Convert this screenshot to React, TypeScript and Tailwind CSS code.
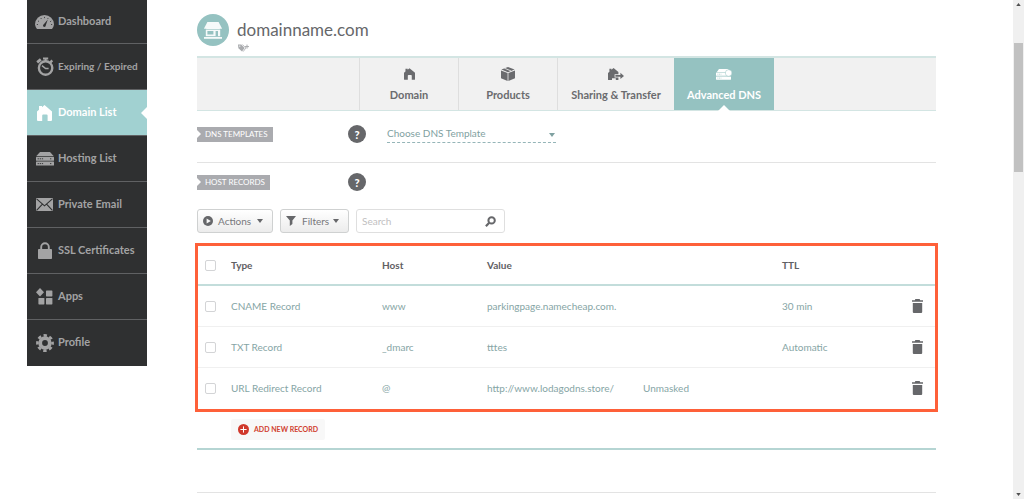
import type { ReactNode } from "react";

type IconProps = { className?: string };

function GaugeIcon({ className }: IconProps) {
    return (
        <svg viewBox="0 0 19 14" className={className}>
            <path d="M2 14A9.3 9.3 0 0 1 0 9.4a9.5 9.4 0 0 1 19 0A9.3 9.3 0 0 1 17 14z" fill="currentColor" />
            <g stroke="#2f3031" strokeWidth=".8" fill="none">
                <path d="M1.8 9.5h1.2M3 5.8l1 .8M5.8 3l.6 1M9.5 1.9v1.2M13.2 3l-.5.9M17.2 9.5H16M16.2 6l-1.1.8" />
            </g>
            <path d="M12.8 4.6l-2 5.6a1.4 1.4 0 1 1-2-1z" fill="#2f3031" />
        </svg>
    );
}

function StopwatchIcon({ className }: IconProps) {
    return (
        <svg viewBox="0 0 18 19" className={className}>
            <g stroke="currentColor" fill="none">
                <circle cx="9.6" cy="11" r="6.7" strokeWidth="2.4" />
                <path d="M9.6 4V1.5M7 1.4h5.2" strokeWidth="2" />
                <path d="M1.2 5.4l3.6-3M14.4 3.6l1.8 1.6" strokeWidth="2.8" />
                <path d="M6 8.6l3.6 3h3" strokeWidth="1.5" />
            </g>
        </svg>
    );
}

function HouseIcon({ className }: IconProps) {
    return (
        <svg viewBox="0 0 15 16" className={className} fill="currentColor">
            <path d="M2 1h3v1.2L7.5 0 15 6.4V15a1 1 0 0 1-1 1h-3.4v-5.6a1 1 0 0 0-1-1H6.2a1 1 0 0 0-1 1V16H1a1 1 0 0 1-1-1V6.4l2-1.7z" />
        </svg>
    );
}

function ServerIcon({ className }: IconProps) {
    return (
        <svg viewBox="0 0 18 14" className={className}>
            <g fill="currentColor">
                <path d="M4 0h10l3.6 4H.4z" />
                <rect y="4.8" width="18" height="4" rx=".6" />
                <rect y="9.6" width="18" height="4" rx=".6" />
            </g>
            <path d="M1.6 6.8h5.6M14 6.8h2M1.6 11.6h5.6M14 11.6h2" stroke="#2f3031" strokeWidth=".9" strokeDasharray="1.3 .8" />
        </svg>
    );
}

function MailIcon({ className }: IconProps) {
    return (
        <svg viewBox="0 0 17 13" className={className}>
            <rect width="17" height="13" rx=".8" fill="currentColor" />
            <path d="M.6.8l7.9 7 7.9-7M.6 12.4l5.6-6M16.4 12.4l-5.6-6" stroke="#2f3031" strokeWidth="1.1" fill="none" />
        </svg>
    );
}

function LockIcon({ className }: IconProps) {
    return (
        <svg viewBox="0 0 14 17" className={className}>
            <path d="M3.2 8V5a3.8 3.8 0 0 1 7.6 0v3" stroke="currentColor" strokeWidth="1.9" fill="none" />
            <rect y="7" width="14" height="10" rx=".8" fill="currentColor" />
        </svg>
    );
}

function AppsIcon({ className }: IconProps) {
    return (
        <svg viewBox="0 0 17 17" className={className} fill="currentColor">
            <path d="M4 0l4 4.2-4 4.2L0 4.2z" />
            <rect x="10" y="2.4" width="6.4" height="6" rx=".6" />
            <rect x="2.4" y="10" width="6" height="6.4" rx=".6" />
            <rect x="10" y="10" width="6.4" height="6.4" rx=".6" />
        </svg>
    );
}

function GearIcon({ className }: IconProps) {
    return (
        <svg viewBox="0 0 18 18" className={className}>
            <circle cx="9" cy="9" r="4.8" stroke="currentColor" strokeWidth="3.8" fill="none" />
            <circle cx="9" cy="9" r="7.6" stroke="currentColor" strokeWidth="2.6" strokeDasharray="3.4 2.57" strokeDashoffset="1.7" fill="none" />
        </svg>
    );
}

function ShopIcon({ className }: IconProps) {
    return (
        <svg viewBox="0 0 18 17" className={className}>
            <g fill="#f6fafa">
                <path d="M3.4 0h11.2L18 6.4c0 .8-18 .8-18 0z" />
                <path d="M1.8 7.6h14.4v6.6H1.8z" />
                <rect y="15" width="18" height="1.8" />
            </g>
            <path d="M3.4 9h6v3.4h-6zM11.6 9H14v5.2h-2.4z" fill="#95c2c1" />
        </svg>
    );
}

function TagPlusIcon({ className }: IconProps) {
    return (
        <svg viewBox="0 0 11 8" className={className}>
            <path d="M0 .6L3.2.4 6.6 4 4 7.6.4 4.2z" fill="#a9abae" />
            <path d="M4.4.5L7.8 4 5.2 7.6" stroke="#a9abae" strokeWidth=".8" fill="none" />
            <circle cx="1.8" cy="2.1" r=".7" fill="#fff" />
            <path d="M7 2.6h4M9 .6v4" stroke="#a9abae" strokeWidth="1" />
        </svg>
    );
}

function BoxIcon({ className }: IconProps) {
    return (
        <svg viewBox="0 0 14 14" className={className} fill="currentColor">
            <path d="M7 0l6.6 2.6L7 5.2.4 2.6z" />
            <path d="M0 3.4l6.6 2.7V14L0 11.2zM14 3.4L7.4 6.1V14l6.6-2.8z" />
            <path d="M3.4 1.2l6.8 2.8" stroke="#f1f1f1" strokeWidth=".8" />
        </svg>
    );
}

function TransferIcon({ className }: IconProps) {
    return (
        <svg viewBox="0 0 16 12" className={className} fill="currentColor">
            <path d="M1.4.8h2v1L5.6 0 10.4 4v2.2H6.6v3.2h3.8V12H7.8v-1.8H4V12H.6a.6.6 0 0 1-.6-.6V5l1.4-1.2z" />
            <path d="M7.4 7h5V4.8L16 7.9 12.4 11V8.7h-5z" />
        </svg>
    );
}

function DnsIcon({ className }: IconProps) {
    return (
        <svg viewBox="0 0 16 11" className={className}>
            <g fill="currentColor">
                <path d="M3 0h9l2 3H.8z" />
                <rect y="3.6" width="14" height="3.2" rx=".4" />
                <rect y="7.5" width="15" height="3.2" rx=".4" />
            </g>
            <path d="M1.4 5.2h4M1.4 9.1h4" stroke="#95c2c1" strokeWidth=".6" strokeDasharray="1 .6" />
            <circle cx="12.6" cy="4" r="3.3" fill="currentColor" stroke="#95c2c1" strokeWidth=".5" />
        </svg>
    );
}

function TrashIcon({ className }: IconProps) {
    return (
        <svg viewBox="0 0 11 14" className={className} fill="currentColor">
            <path d="M3.4 0h4.2l.6 1.2H11v1.6H0V1.2h2.8z" />
            <path d="M.8 4h9.4v9a1 1 0 0 1-1 1H1.8a1 1 0 0 1-1-1z" />
        </svg>
    );
}

function Caret({ className }: IconProps) {
    return (
        <svg viewBox="0 0 6 4" className={className} fill="currentColor">
            <path d="M0 0h6L3 4z" />
        </svg>
    );
}

const navItems = [
    { label: "Dashboard", icon: <GaugeIcon className="h-[14px] w-[19px]" /> },
    { label: "Expiring / Expired", icon: <StopwatchIcon className="h-[19px] w-[18px]" />, small: true },
    { label: "Domain List", icon: <HouseIcon className="h-[16px] w-[15px]" />, active: true },
    { label: "Hosting List", icon: <ServerIcon className="h-[14px] w-[18px]" /> },
    { label: "Private Email", icon: <MailIcon className="h-[13px] w-[17px]" /> },
    { label: "SSL Certificates", icon: <LockIcon className="h-[17px] w-[14px]" /> },
    { label: "Apps", icon: <AppsIcon className="size-[17px]" /> },
    { label: "Profile", icon: <GearIcon className="size-[18px]" /> },
];

const tabs = [
    { label: "Domain", icon: <HouseIcon className="h-[12px] w-[11px]" />, width: "w-[99px]" },
    { label: "Products", icon: <BoxIcon className="size-[14px]" />, width: "w-[99px]" },
    { label: "Sharing & Transfer", icon: <TransferIcon className="h-[12px] w-[16px]" />, width: "w-[117px]" },
    { label: "Advanced DNS", icon: <DnsIcon className="h-[11px] w-[16px]" />, width: "w-[100px]", active: true },
];

const records = [
    { type: "CNAME Record", host: "www", value: "parkingpage.namecheap.com.", extra: "", ttl: "30 min" },
    { type: "TXT Record", host: "_dmarc", value: "tttes", extra: "", ttl: "Automatic" },
    { type: "URL Redirect Record", host: "@", value: "http://www.lodagodns.store/", extra: "Unmasked", ttl: "" },
];

function Sidebar() {
    return (
        <nav className="w-[120px] shrink-0 self-start bg-[#2f3031]">
            {navItems.map((item, i) => (
                <a
                    key={item.label}
                    href="#"
                    className={[
                        "relative flex items-center border-b",
                        i === 0 ? "h-[44px]" : "h-[46px]",
                        i === navItems.length - 1 ? "border-[#2f3031]" : "border-[#606163]",
                        item.active ? "bg-[#a1d1d1] text-white" : "text-[#a3a3a4]",
                    ].join(" ")}
                >
                    <span className="flex w-[35px] justify-center">{item.icon}</span>
                    <span
                        className={[
                            "-ml-[4px] font-bold whitespace-nowrap",
                            item.small ? "text-[10px]" : "text-[11px]",
                        ].join(" ")}
                    >
                        {item.label}
                    </span>
                    {item.active && (
                        <svg viewBox="0 0 6 12" className="absolute right-0 h-3 w-1.5">
                            <path d="M6 0v12L0 6z" fill="#fff" />
                        </svg>
                    )}
                </a>
            ))}
        </nav>
    );
}

function TabBar() {
    return (
        <div className="mt-[4px] flex h-[55px] border-t-2 border-b border-[#d3e5e3] bg-[#f1f1f1]">
            <div className="flex-1" />
            {tabs.map((tab) => (
                <a
                    key={tab.label}
                    href="#"
                    className={[
                        "relative flex shrink-0 flex-col items-center text-[11px] font-bold",
                        tab.width,
                        tab.active ? "bg-[#95c2c1] text-white" : "border-l border-[#dedede] text-[#6a6b6e]",
                    ].join(" ")}
                >
                    <span className="mt-[8px] flex h-[16px] items-center">{tab.icon}</span>
                    <span className="mt-[5px] leading-4 whitespace-nowrap">{tab.label}</span>
                    {tab.active && (
                        <svg viewBox="0 0 12 6" className="absolute -bottom-px h-1.5 w-3">
                            <path d="M0 6h12L6 0z" fill="#fff" />
                        </svg>
                    )}
                </a>
            ))}
            <div className="flex-1" />
        </div>
    );
}

function SectionRow({ label, children }: { label: string; children?: ReactNode }) {
    return (
        <div className="flex h-[20px] items-center">
            <div className="flex w-[151px]">
                <span className="relative flex h-[15px] items-center bg-[#aaabaf] pr-[5px] pl-[8px] text-[8px] text-white uppercase">
                    <svg viewBox="0 0 4 8" className="absolute left-0 h-2 w-1">
                        <path d="M0 0v8l4-4z" fill="#fff" />
                    </svg>
                    {label}
                </span>
            </div>
            <button
                type="button"
                aria-label={`About ${label}`}
                className="mr-[21px] flex size-[18px] items-center justify-center rounded-full bg-[#66676a] text-[11px] leading-none font-black text-white"
            >
                ?
            </button>
            {children}
        </div>
    );
}

function Toolbar() {
    const button =
        "flex h-[24px] items-center rounded-[3px] border border-[#cfd1d1] bg-linear-to-b from-white to-[#ececec] pr-[9px] pl-[5px] text-[10px] text-[#77787b]";

    return (
        <div className="mt-[17px] flex">
            <button type="button" className={`${button} w-[76px]`}>
                <svg viewBox="0 0 10 10" className="mr-[5px] size-[10px]">
                    <circle cx="5" cy="5" r="5" fill="#66676a" />
                    <path d="M3.6 2.4v5.2L7.8 5z" fill="#f7f7f7" />
                </svg>
                Actions
                <Caret className="ml-auto h-1 w-1.5 text-[#66676a]" />
            </button>
            <button type="button" className={`${button} ml-[7px] w-[69px]`}>
                <svg viewBox="0 0 10 10" className="mr-[6px] size-[10px]">
                    <path d="M0 0h10L6.4 4.6V8L3.8 10V4.6z" fill="#66676a" />
                </svg>
                Filters
                <Caret className="ml-auto h-1 w-1.5 text-[#66676a]" />
            </button>
            <div className="ml-[7px] flex h-[24px] w-[149px] items-center rounded-[3px] border border-[#dfdfdf] px-[5px]">
                <input
                    type="text"
                    placeholder="Search"
                    aria-label="Search"
                    className="w-full min-w-0 text-[10px] outline-none placeholder:text-[#bfc0c1]"
                />
                <button type="button" aria-label="Run search" className="mr-[3px] shrink-0">
                    <svg viewBox="0 0 11 11" className="size-[11px]">
                        <circle cx="6.6" cy="4.4" r="3.2" stroke="#66676a" strokeWidth="2" fill="none" />
                        <path d="M4.2 6.8L.9 10.2" stroke="#66676a" strokeWidth="2.2" />
                    </svg>
                </button>
            </div>
        </div>
    );
}

function Checkbox({ label }: { label: string }) {
    return (
        <input
            type="checkbox"
            aria-label={label}
            className="block size-[11px] appearance-none rounded-[2px] border border-[#d3d4d6] bg-white checked:bg-[#95c2c1]"
        />
    );
}

function RecordsTable() {
    return (
        <div className="-mx-[2px] mt-[10px] border-[3px] border-[#fe6039]">
            <table className="w-full table-fixed border-separate border-spacing-0 text-left text-[10px]">
                <colgroup>
                    <col className="w-[33px]" />
                    <col className="w-[151px]" />
                    <col className="w-[105px]" />
                    <col className="w-[156px]" />
                    <col className="w-[139px]" />
                    <col />
                    <col className="w-[36px]" />
                </colgroup>
                <thead className="text-[#5f6063] [&_th]:h-[40px] [&_th]:border-b-2 [&_th]:border-[#c3dddb]">
                    <tr>
                        <th className="pl-[7px]">
                            <Checkbox label="Select all records" />
                        </th>
                        <th>Type</th>
                        <th>Host</th>
                        <th>Value</th>
                        <th />
                        <th>TTL</th>
                        <th />
                    </tr>
                </thead>
                <tbody className="text-[#86a5a5] [&_td]:h-[41px] [&_td]:border-b [&_td]:border-[#f0f0f0] [&>tr:last-child>td]:border-transparent">
                    {records.map((record) => (
                        <tr key={record.type}>
                            <td className="pl-[7px]">
                                <Checkbox label={`Select ${record.type}`} />
                            </td>
                            <td>{record.type}</td>
                            <td>{record.host}</td>
                            <td className="whitespace-nowrap">{record.value}</td>
                            <td>{record.extra}</td>
                            <td>{record.ttl}</td>
                            <td className="pl-[13px]">
                                <button type="button" aria-label={`Delete ${record.type}`} className="block text-[#66676a]">
                                    <TrashIcon className="h-[14px] w-[11px]" />
                                </button>
                            </td>
                        </tr>
                    ))}
                </tbody>
            </table>
        </div>
    );
}

function Scrollbar() {
    return (
        <div className="flex w-[11px] shrink-0 flex-col items-center bg-[#f0f0f0] text-[#505050]">
            <Caret className="mt-[3px] h-[3px] w-[5px] rotate-180" />
            <div className="mt-[37px] h-[129px] w-[9px] bg-[#c1c1c1]" />
            <Caret className="mt-auto mb-[3px] h-[3px] w-[5px]" />
        </div>
    );
}

export default function App() {
    return (
        <div className="flex min-h-screen bg-white pl-[27px] font-['Lato',sans-serif]">
            <Sidebar />
            <main className="mr-[77px] ml-[50px] min-w-0 flex-1">
                <header className="flex pt-[14px]">
                    <span className="flex size-[32px] items-center justify-center rounded-full bg-[#95c2c1]">
                        <ShopIcon className="h-[17px] w-[18px]" />
                    </span>
                    <div className="ml-[8px]">
                        <h1 className="mt-[4px] text-[17px] leading-6 text-[#66676a]">domainname.com</h1>
                        <TagPlusIcon className="mt-[2px] ml-px h-[8px] w-[11px]" />
                    </div>
                </header>

                <TabBar />

                <div className="mt-[13px] border-b border-[#e3e3e3] pb-[18px]">
                    <SectionRow label="DNS Templates">
                        <div className="relative w-[169px] text-[#7fa1a1]">
                            <select
                                aria-label="DNS template"
                                className="block h-[17px] w-full appearance-none border-b border-dashed border-[#95b5b8] text-[10px] outline-none"
                            >
                                <option>Choose DNS Template</option>
                            </select>
                            <Caret className="pointer-events-none absolute top-[7px] right-px h-1 w-1.5" />
                        </div>
                    </SectionRow>
                </div>

                <div className="mt-[9px]">
                    <SectionRow label="Host Records" />
                </div>

                <Toolbar />
                <RecordsTable />

                <div className="border-b-2 border-[#b5d5d3] pt-[7px] pb-[8px] pl-[34px]">
                    <button
                        type="button"
                        className="flex h-[21px] items-center gap-[5px] rounded-[2px] bg-[#f8f8f8] px-[7px] text-[7px] font-bold text-[#d0402f]"
                    >
                        <svg viewBox="0 0 11 11" className="size-[11px]">
                            <circle cx="5.5" cy="5.5" r="5.5" fill="#d0392c" />
                            <path d="M5.5 2.4v6.2M2.4 5.5h6.2" stroke="#fff" strokeWidth="1" />
                        </svg>
                        ADD NEW RECORD
                    </button>
                </div>
                <div className="mt-[42px] border-b border-[#e3e3e3]" />
            </main>
            <Scrollbar />
        </div>
    );
}
